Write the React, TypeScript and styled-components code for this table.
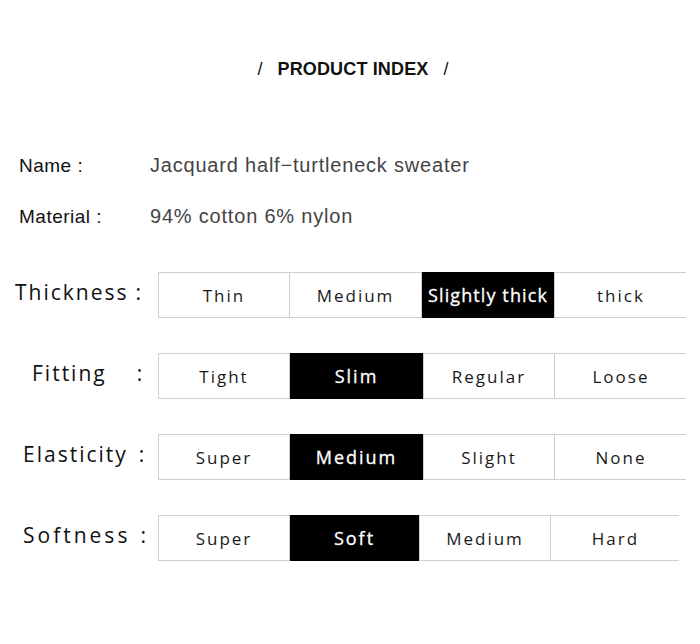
import React from "react";
import styled, { createGlobalStyle } from "styled-components";

const Global = createGlobalStyle`
  html, body { margin: 0; padding: 0; background: #fff; }
  body { font-family: "Liberation Sans", Arial, sans-serif; }
`;

const Page = styled.div`
  width: 700px;
  height: 644px;
  background: #fff;
  overflow: hidden;
`;

const Title = styled.h1`
  margin: 0;
  padding-top: 57px;
  display: flex;
  justify-content: center;
  align-items: center;
  gap: 15px;
  font-family: "Liberation Sans", Arial, sans-serif;
  font-size: 18px;
  line-height: 24px;
  color: #111;
  font-weight: 700;
  padding-left: 6px;
`;

const Slash = styled.span`
  font-weight: 400;
`;

const Heading = styled.span`
  letter-spacing: 0.15px;
`;

const Info = styled.div`
  margin-top: 73px;
  padding-left: 19px;
  display: flex;
  flex-direction: column;
  gap: 27px;
`;

const InfoRow = styled.div`
  display: flex;
  align-items: baseline;
  height: 24px;
`;

const InfoLabel = styled.span`
  width: 131px;
  font-size: 19px;
  letter-spacing: 0.5px;
  color: #111;
`;

const InfoValue = styled.span`
  font-size: 20px;
  letter-spacing: 0.8px;
  color: #444;
`;

const Attrs = styled.div`
  margin-top: 43px;
  display: flex;
  flex-direction: column;
  gap: 35px;
`;

const AttrRow = styled.div`
  display: flex;
  align-items: center;
  height: 46px;
`;

const Label = styled.div<{ $indent: number; $ls: number }>`
  width: 158px;
  box-sizing: border-box;
  padding-left: ${(p) => p.$indent}px;
  margin-top: -6px;
  font-family: "Open Sans", sans-serif;
  font-size: 21px;
  letter-spacing: ${(p) => p.$ls}px;
  color: #111;
  white-space: pre;
`;

const Colon = styled.span<{ $gap: number }>`
  margin-left: ${(p) => p.$gap}px;
`;

const Scale = styled.div<{ $cols: string }>`
  display: grid;
  grid-template-columns: ${(p) => p.$cols};
  height: 46px;
  box-sizing: border-box;
  border: 1px solid #cfcfcf;
`;

const Cell = styled.div<{ $on: boolean; $ls: number }>`
  display: flex;
  align-items: center;
  justify-content: center;
  border-left: 1px solid #cfcfcf;
  &:first-child { border-left: none; }
  background: ${(p) => (p.$on ? "#000" : "#fff")};
  color: ${(p) => (p.$on ? "#fff" : "#1a1a1a")};
  font-family: "Open Sans", sans-serif;
  font-size: ${(p) => (p.$on ? 18 : 17)}px;
  font-weight: 400;
  -webkit-text-stroke: ${(p) => (p.$on ? "0.3px #fff" : "0")};
  letter-spacing: ${(p) => p.$ls}px;
  white-space: nowrap;
  margin: ${(p) => (p.$on ? "-1px 0" : "0")};
`;

type Attr = {
  name: string;
  indent: number;
  ls: number;
  gap: number;
  cols: number[];
  options: string[];
  active: number;
};

const attrs: Attr[] = [
  { name: "Thickness", indent: 15, ls: 2, gap: 7, cols: [130, 132, 133, 133], options: ["Thin", "Medium", "Slightly thick", "thick"], active: 2 },
  { name: "Fitting", indent: 32, ls: 2, gap: 30, cols: [130, 134, 131, 133], options: ["Tight", "Slim", "Regular", "Loose"], active: 1 },
  { name: "Elasticity", indent: 23, ls: 2, gap: 11, cols: [130, 134, 131, 133], options: ["Super", "Medium", "Slight", "None"], active: 1 },
  { name: "Softness", indent: 23, ls: 3, gap: 10, cols: [130, 130, 131, 130], options: ["Super", "Soft", "Medium", "Hard"], active: 1 },
];

export default function App() {
  return (
    <Page>
      <Global />
      <Title>
        <Slash>/</Slash>
        <Heading>PRODUCT INDEX</Heading>
        <Slash>/</Slash>
      </Title>
      <Info>
        <InfoRow>
          <InfoLabel>Name :</InfoLabel>
          <InfoValue>Jacquard half−turtleneck sweater</InfoValue>
        </InfoRow>
        <InfoRow>
          <InfoLabel>Material :</InfoLabel>
          <InfoValue>94% cotton 6% nylon</InfoValue>
        </InfoRow>
      </Info>
      <Attrs>
        {attrs.map((a) => (
          <AttrRow key={a.name}>
            <Label $indent={a.indent} $ls={a.ls}>
              {a.name}
              <Colon $gap={a.gap}>:</Colon>
            </Label>
            <Scale $cols={a.cols.map((c) => `${c}px`).join(" ")} style={{ width: a.cols.reduce((s, c) => s + c, 0) }}>
              {a.options.map((o, i) => (
                <Cell key={o + i} $on={i === a.active} $ls={o.length > 10 ? 1.1 : 2}>
                  {o}
                </Cell>
              ))}
            </Scale>
          </AttrRow>
        ))}
      </Attrs>
    </Page>
  );
}
